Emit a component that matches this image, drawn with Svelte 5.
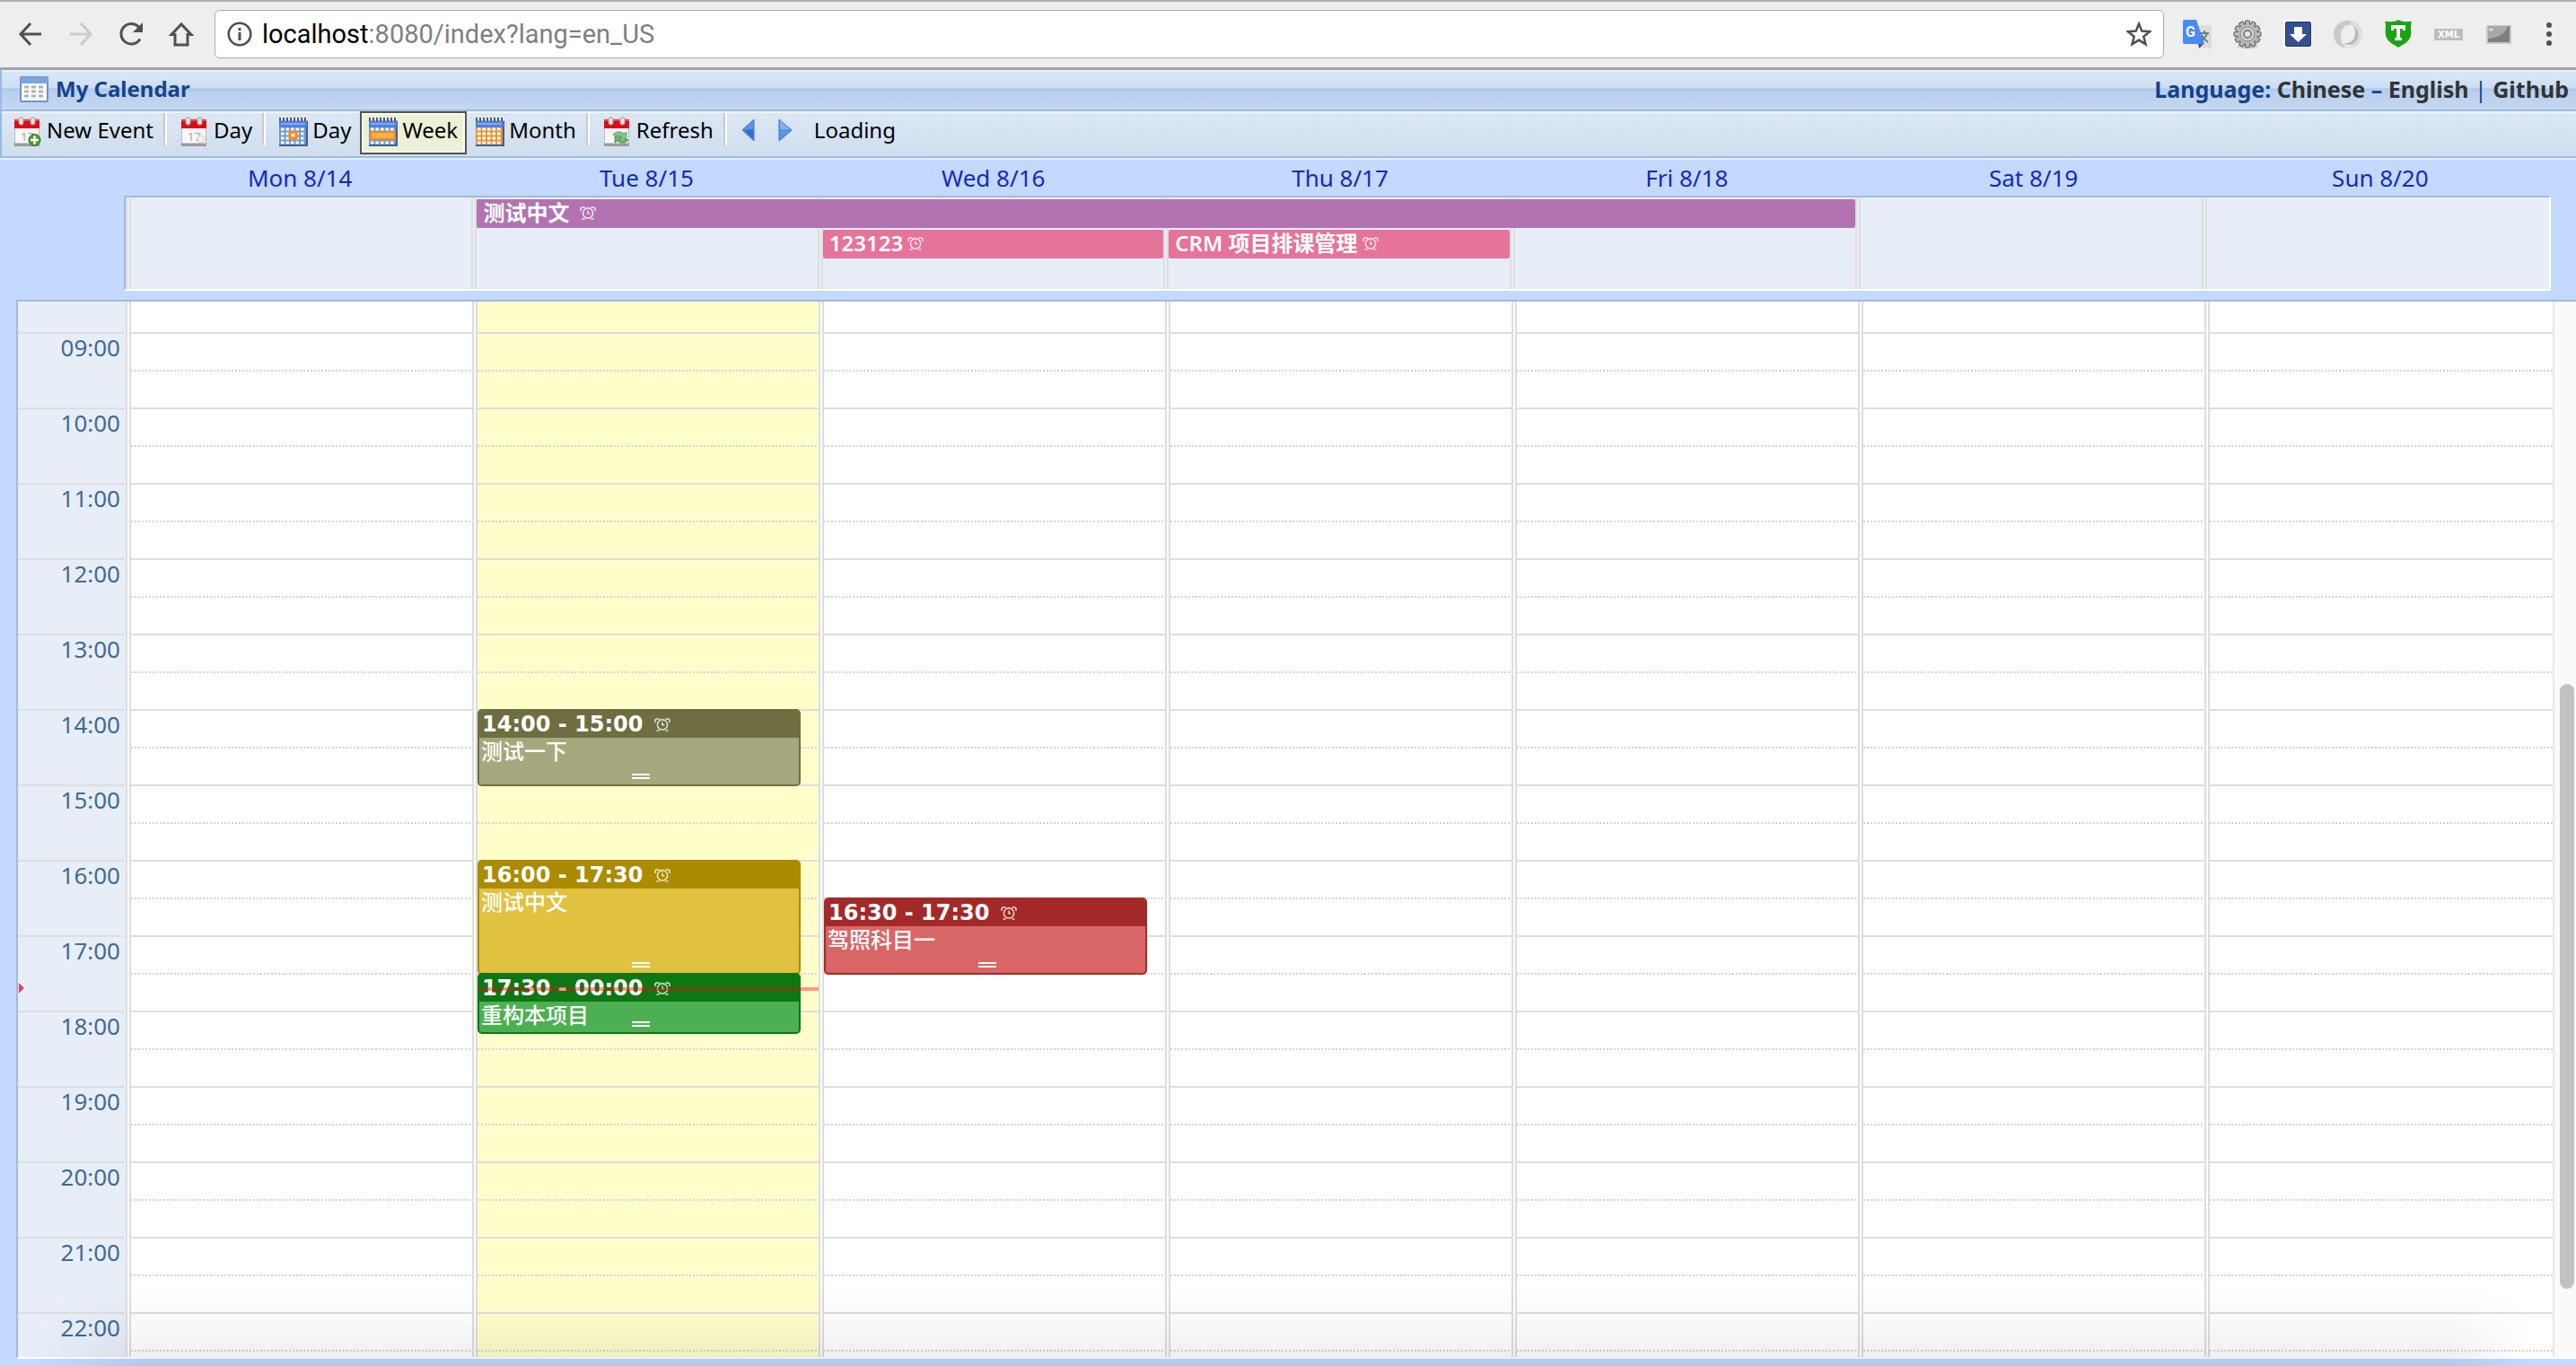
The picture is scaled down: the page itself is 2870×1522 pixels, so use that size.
<script>
  const days = ['Mon 8/14', 'Tue 8/15', 'Wed 8/16', 'Thu 8/17', 'Fri 8/18', 'Sat 8/19', 'Sun 8/20'];
  const hours = ['09', '10', '11', '12', '13', '14', '15', '16', '17', '18', '19', '20', '21', '22'];
  const today = 1;
  const firstHour = 9;
  const hourHeight = 84;

  const allDay = [
    { title: '测试中文', from: 1, span: 4, row: 1, kind: 'purple', spaced: true },
    { title: '123123', from: 2, span: 1, row: 2, kind: 'pink' },
    { title: 'CRM 项目排课管理', from: 3, span: 1, row: 2, kind: 'pink' }
  ];

  const events = [
    { day: 1, start: 14, length: 86, time: '14:00 - 15:00', title: '测试一下', kind: 'olive' },
    { day: 1, start: 16, length: 128, time: '16:00 - 17:30', title: '测试中文', kind: 'gold' },
    { day: 1, start: 17.5, length: 68, time: '17:30 - 00:00', title: '重构本项目', kind: 'green' },
    { day: 2, start: 16.5, length: 86, time: '16:30 - 17:30', title: '驾照科目一', kind: 'red' }
  ];

  // 34px of the 08:00 row stay visible above the first full hour.
  const yOf = (t) => 34 + (t - firstHour) * hourHeight;
  const gearTeeth = Array.from({ length: 12 }, (_, i) => i * 30);
</script>

{#snippet alarm()}
  <svg class="alarm" viewBox="0 0 18 15" aria-hidden="true">
    <g fill="none" stroke="currentColor" stroke-width="1.5">
      <circle cx="9" cy="7.5" r="5.6" />
      <path d="M9 4.500v3.200h2.200" />
      <path d="M1 5V3q0-2 2-2h2M13 1h2q2 0 2 2v2M2.500 14h3M12.500 14h3" />
      <path d="M5 1.500h8" stroke-dasharray="1.500 2" />
    </g>
  </svg>
{/snippet}

{#snippet pageCalendar(extra)}
  <svg class="icon" viewBox="0 0 32 34" aria-hidden="true">
    <rect x="1.500" y="3" width="27" height="29" rx="1" fill="#f7f7f7" stroke="#bdbdbd" />
    <path d="M1 29.500h28V33H1z" fill="#9c9c9c" />
    <path d="M1 3h28v10H1z" fill="#de0b12" />
    <path d="M1 3h28v2H1z" fill="#f0444a" />
    <rect x="6" y="1" width="5" height="8" rx="2" fill="#e8e0e0" stroke="#a99" />
    <rect x="19" y="1" width="5" height="8" rx="2" fill="#e8e0e0" stroke="#a99" />
    {#if extra !== 'refresh'}<text x="8" y="27" class="digits">17</text>{/if}
    {#if extra === 'add'}
      <circle cx="23.500" cy="26" r="6.500" fill="#4e9a36" stroke="#2f6d1f" />
      <path d="M23.500 21.500v9M19 26h9" stroke="#fff" stroke-width="2.600" />
    {:else if extra === 'today'}
      <circle cx="23" cy="25" r="4" fill="#f1f1f1" stroke="#d5d5d5" />
    {:else}
      <path d="M11 20c3-4 9-4 12-1l3-2v8h-8l3-3c-3-2-5-2-6 0z" fill="#8cc48a" stroke="#5ea763" />
      <path d="M28 26c-3 4-9 4-12 1l-3 2v-7h8l-3 3c3 2 5 2 6 0z" fill="#6fb472" stroke="#4d9a55" />
    {/if}
  </svg>
{/snippet}

{#snippet gridCalendar(mode)}
  <svg class="icon" viewBox="0 0 32 34" aria-hidden="true">
    <rect x="0" y="3" width="32" height="30" fill="#3f5f92" />
    <rect x="0" y="3" width="30" height="28" fill={mode === 'month' ? '#e5963a' : '#7398d4'} />
    <rect x="0" y="4" width="31" height="8" fill="#4c7fe8" />
    <path d="M2 8h27" stroke="#86abf5" stroke-width="2" />
    <path d="M0 3h32" stroke="#f4f4f4" stroke-width="3" />
    <path d="M0 3h32" stroke="#555" stroke-width="4" stroke-dasharray="2 2" />
    {#each [14, 19, 24, 29] as y}
      <path d="M2 {y}h27" stroke="#fff" stroke-width="3.200" stroke-dasharray="3.500 2" />
    {/each}
    {#if mode === 'day'}
      <rect x="12" y="17" width="7" height="7" fill="#fff3c8" stroke="#f08a1c" stroke-width="3" />
    {:else if mode === 'week'}
      <rect x="2" y="17" width="27" height="8" fill="#ffb04e" stroke="#f08a1c" stroke-width="2" />
    {/if}
  </svg>
{/snippet}

<div class="window">
  <nav class="browser" aria-label="Browser">
    <button class="nav" aria-label="Back">
      <svg viewBox="0 0 28 28"><path d="M26 14H3M14 2L3 14l11 12" /></svg>
    </button>
    <button class="nav off" aria-label="Forward">
      <svg viewBox="0 0 28 28"><path d="M2 14h23M14 2l11 12-11 12" /></svg>
    </button>
    <button class="nav" aria-label="Reload">
      <svg viewBox="0 0 28 28">
        <path d="M24 19.500A11.300 11.300 0 1 1 22.500 6" /><path d="M27 1v11H16z" fill="#505050" stroke="none" />
      </svg>
    </button>
    <button class="nav" aria-label="Home">
      <svg viewBox="0 0 28 28"><path d="M14 3L3 14.500h4V26h14V14.500h4z" /></svg>
    </button>
    <div class="address">
      <svg class="info" viewBox="0 0 28 28" aria-hidden="true">
        <circle cx="14" cy="14" r="12.300" fill="none" stroke="#505050" stroke-width="2.600" />
        <path d="M14 12v9M14 7v3" stroke="#505050" stroke-width="3" />
      </svg>
      <span class="url">localhost<span>:8080/index?lang=en_US</span></span>
      <svg class="star" viewBox="0 0 28 28" aria-hidden="true">
        <path d="M14 2.500l3.300 8.100 8.700.6-6.700 5.600 2.200 8.500L14 20.600l-7.500 4.700 2.200-8.500L2 11.200l8.700-.6z" fill="none" stroke="#505050" stroke-width="2.500" />
      </svg>
    </div>
    <div class="extensions">
      <svg viewBox="0 0 32 32" aria-hidden="true">
        <path d="M14 6h16a2 2 0 0 1 2 2v22a2 2 0 0 1-2 2H18z" fill="#dcdcdc" />
        <path d="M17 26h7l-6 6z" fill="#3a50b8" />
        <path d="M2 0h13l9 27H2a2 2 0 0 1-2-2V2a2 2 0 0 1 2-2z" fill="#4a8af4" />
        <text x="3" y="19" class="gletter">G</text>
        <path d="M19 15h10M24 12v3M27 15c-1 4-4 7-7 9M21 17c2 4 4 6 7 8" fill="none" stroke="#5f7f8c" stroke-width="1.800" />
      </svg>
      <svg viewBox="0 0 32 32" aria-hidden="true">
        <ellipse cx="16" cy="30" rx="12" ry="2" fill="#cfcfcf" />
        {#each gearTeeth as angle}
          <rect x="13.500" y="1" width="5" height="7" rx="1" fill="#b9b9b9" stroke="#555" transform="rotate({angle} 16 16)" />
        {/each}
        <circle cx="16" cy="16" r="11" fill="#b9b9b9" />
        <circle cx="16" cy="16" r="8" fill="#cdcdcd" stroke="#8c8c8c" />
        <circle cx="16" cy="16" r="4" fill="#e5e5e5" stroke="#666" stroke-width="1.500" />
      </svg>
      <svg viewBox="0 0 32 32" aria-hidden="true">
        <rect width="32" height="32" fill="#fff" />
        <rect x="2.500" y="2.500" width="28" height="27" rx="1.500" fill="#34508f" stroke="#1f3768" />
        <path d="M12 8h9v8h5l-9.500 9L7 16h5z" fill="#fff" />
      </svg>
      <svg viewBox="0 0 32 32" aria-hidden="true">
        <path d="M20 1C8-1 0 7 0 16s7 16 16 15C9 29 7 22 8 16 9 8 14 5 21 6c-2-2-3-4-1-5z" fill="#c9c9c9" />
        <path d="M20 1c8 2 12 8 12 14 0 10-7 17-17 16 7-2 10-8 10-15 0-6-2-9-6-11z" fill="#dedede" />
        <path d="M11 26c8 1 13-4 13-11 0-4-1-7-4-9 9 3 10 15 3 20-4 3-9 3-12 0z" fill="#b9b9b9" />
      </svg>
      <svg viewBox="0 0 32 32" aria-hidden="true">
        <path d="M16 0c4 3 9 2 15 2-2 4 0 9-1 15-1 7-8 10-14 14C10 27 3 24 2 17 1 11 3 6 1 2c6 0 11 1 15-2z" fill="#1aa313" />
        <path d="M8 6h16v6h-3v-2h-3v10h2v3h-8v-3h2V10h-3v2H8z" fill="#fff" />
      </svg>
      <svg viewBox="0 0 32 32" aria-hidden="true">
        <rect y="10" width="32" height="13" fill="#bdbdbd" />
        <text x="16" y="20" class="xml">XML</text>
      </svg>
      <svg viewBox="0 0 32 32" aria-hidden="true">
        <rect x="2" y="6" width="28" height="21" rx="1" fill="#c8c8c8" />
        <rect x="4" y="7" width="24" height="18" fill="#808080" />
        <path d="M4 7h22C24 15 16 20 4 21z" fill="#a9a9a9" />
        <path d="M5 11h4M7.500 9.500L9 11l-1.500 1.500" fill="none" stroke="#fff" />
      </svg>
      <button class="dots" aria-label="Menu">
        <svg viewBox="0 0 32 32"><g fill="#505050"><circle cx="16" cy="6" r="3" /><circle cx="16" cy="16" r="3" /><circle cx="16" cy="26" r="3" /></g></svg>
      </button>
    </div>
  </nav>

  <header class="title">
    <svg class="icon" viewBox="0 0 32 32" aria-hidden="true">
      <rect x="1" y="3" width="30" height="27" rx="1" fill="#fff" stroke="#6d93c9" stroke-width="2" />
      <path d="M1 3h30v7H1z" fill="#79a7e0" />
      <g stroke="#b0b0b0" stroke-width="3" stroke-dasharray="5 3">
        <path d="M5 14h23M5 19h23M5 24h23" />
      </g>
    </svg>
    <h1>My Calendar</h1>
    <p>Language: <a href="?lang=zh_CN">Chinese</a> – <a href="?lang=en_US">English</a> <span class="pipe">|</span> <a href="#github">Github</a></p>
  </header>

  <div class="toolbar" role="toolbar" aria-label="Calendar">
    <button>{@render pageCalendar('add')}New Event</button>
    <span class="sep"></span>
    <button>{@render pageCalendar('today')}Day</button>
    <span class="sep"></span>
    <button>{@render gridCalendar('day')}Day</button>
    <button class="active" aria-pressed="true">{@render gridCalendar('week')}Week</button>
    <button>{@render gridCalendar('month')}Month</button>
    <span class="sep"></span>
    <button>{@render pageCalendar('refresh')}Refresh</button>
    <span class="sep"></span>
    <button aria-label="Previous week">
      <svg class="arrow" viewBox="0 0 20 28"><path d="M15 2v24L2 14z" fill="#5b94e4" stroke="#3d74c9" /><path d="M14 13v11L4 14z" fill="#2f6bd0" /></svg>
    </button>
    <button aria-label="Next week">
      <svg class="arrow" viewBox="0 0 20 28"><path d="M3 2v24l14-12z" fill="#5b94e4" stroke="#3d74c9" /><path d="M4 3v10h11z" fill="#7fb0f0" /></svg>
    </button>
    <span class="status">Loading</span>
  </div>

  <main>
    <div class="heads">
      {#each days as day}<div>{day}</div>{/each}
    </div>

    <div class="allday">
      {#each days as day, i (day)}
        <div class="slot" style:grid-column={i + 1}></div>
      {/each}
      {#each allDay as item}
        <div class="bar {item.kind}" style:grid-column="{item.from + 1} / span {item.span}" style:grid-row={item.row}>
          {item.title}<span class:spaced={item.spaced}>{@render alarm()}</span>
        </div>
      {/each}
    </div>

    <div class="board">
      <div class="times">
        <div class="lead"></div>
        {#each hours as hour}<div class="hour">{hour}:00</div>{/each}
        <svg class="now-mark" viewBox="0 0 10 18" style:top="{yOf(17.5) + 8}px" aria-hidden="true">
          <path d="M0 1l8 8-8 8z" fill="#dd4477" stroke="#fff" stroke-width="1.500" />
        </svg>
      </div>
      <div class="columns">
        {#each days as day, i (day)}
          <section class="day" class:today={i === today} aria-label={day}>
            <div class="lead"></div>
            {#each hours as hour (hour)}
              <div class="cell"></div>
            {/each}
            {#each events.filter((e) => e.day === i) as e}
              <article class="event {e.kind}" style:top="{yOf(e.start)}px" style:height="{e.length}px">
                <h2>{e.time}{@render alarm()}</h2>
                <p>{e.title}</p>
                <i class="grip"></i>
              </article>
            {/each}
            {#if i === today}
              <div class="now" style:top="{yOf(17.5) + 16}px"></div>
            {/if}
          </section>
        {/each}
      </div>
      <div class="scroll"><div class="thumb"></div></div>
    </div>
  </main>
  <div class="shade"></div>
</div>

<style>
  :global(body) {
    margin: 0;
    background: #c3d9ff;
  }
  :global(*) {
    box-sizing: border-box;
  }
  .window {
    position: relative;
    display: flex;
    flex-direction: column;
    height: 100vh;
    overflow: hidden;
    font: 24px/32px 'Noto Sans', 'Noto Sans CJK SC', sans-serif;
    color: #000;
  }
  button {
    display: flex;
    align-items: center;
    margin: 0;
    padding: 0;
    border: 0;
    background: none;
    font: inherit;
    color: inherit;
  }
  h1,
  h2,
  p {
    margin: 0;
    font-size: inherit;
  }

  .browser {
    display: flex;
    align-items: center;
    flex: none;
    height: 77px;
    padding: 0 14px 2px 20px;
    border-top: 2px solid #b0b0b0;
    border-bottom: 2px solid #a3a3a3;
    background: #eeeeee;
  }
  .nav {
    margin-right: 28px;
  }
  .nav svg {
    width: 28px;
    height: 28px;
    fill: none;
    stroke: #505050;
    stroke-width: 3;
  }
  .nav.off svg {
    stroke: #cccccc;
  }
  .address {
    display: flex;
    align-items: center;
    flex: 1;
    height: 54px;
    margin-left: -5px;
    padding: 0 13px;
    border: 1px solid #a9a9a9;
    border-radius: 6px;
    background: #fff;
  }
  .info,
  .star {
    flex: none;
    width: 28px;
    height: 28px;
  }
  .url {
    flex: 1;
    padding-left: 11px;
    font-family: Roboto, sans-serif;
    font-size: 29px;
  }
  .url span {
    color: #7f7f7f;
  }
  .extensions {
    display: flex;
    gap: 24px;
    margin-left: 21px;
  }
  .extensions svg {
    display: block;
    width: 32px;
    height: 32px;
  }
  .gletter {
    font: bold 16px Roboto, sans-serif;
    fill: #fff;
  }
  .xml {
    font: bold 10px 'DejaVu Sans', sans-serif;
    fill: #fff;
    text-anchor: middle;
  }
  .digits {
    font: 13px 'Noto Sans', sans-serif;
    fill: #a5a5a5;
  }

  .title {
    display: flex;
    align-items: center;
    flex: none;
    height: 47px;
    padding: 0 8px 2px 20px;
    border-top: 1px solid #8ba5c9;
    border-bottom: 2px solid #99bbe8;
    border-left: 2px solid #99bbe8;
    background: linear-gradient(#e8f1fb 2px, #dae7f6 2px, #cddef3 45%, #abc7ec 48%, #b8cfee 55%, #c6d8f0);
    font-size: 25px;
    font-weight: bold;
    color: #15428b;
  }
  .pipe {
    font-weight: normal;
  }
  .icon {
    flex: none;
    width: 32px;
    height: 34px;
  }
  h1 {
    flex: 1;
    padding-left: 8px;
    font-size: 24px;
  }
  a {
    color: #333;
    text-decoration: none;
  }

  .toolbar {
    display: flex;
    align-items: flex-start;
    flex: none;
    height: 52px;
    padding-left: 3px;
    border-bottom: 2px solid #99bbe8;
    border-left: 2px solid #99bbe8;
    background: linear-gradient(#f0f5fb 2px, #dbe7f4 2px, #cfddee);
  }
  .toolbar button {
    gap: 5px;
    height: 48px;
    padding: 0 8px 6px;
    border: 2px solid transparent;
  }
  .toolbar .icon {
    margin-top: 4px;
  }
  .toolbar .active {
    border-color: #555;
    background: #ecf0d5;
    box-shadow: inset 0 0 0 2px #fbfcf3;
  }
  .sep {
    width: 4px;
    height: 36px;
    margin: 2px 5px 0 1px;
    border-left: 2px solid #cbcbcb;
    border-right: 2px solid #fff;
  }
  .arrow {
    width: 20px;
    height: 28px;
  }
  .status {
    padding: 5px 12px;
  }

  main {
    display: flex;
    flex: 1;
    flex-direction: column;
    min-height: 0;
    padding: 0 0 8px 18px;
    border-top: 2px solid #e8effc;
    background: #c3d9ff;
  }
  .heads,
  .allday {
    display: grid;
    grid-template-columns: repeat(7, 1fr);
    column-gap: 2px;
    flex: none;
  }
  .heads {
    height: 40px;
    margin: 0 26px 0 124px;
    font-size: 26px;
    line-height: 40px;
    text-align: center;
    color: #112abb;
  }
  .allday {
    grid-template-rows: 32px 32px 1fr;
    row-gap: 2px;
    height: 106px;
    margin: 0 28px 10px 120px;
    padding: 2px 0 0 4px;
    border: 2px solid #fff;
    border-top-color: #a2bbdd;
    border-left-color: #a2bbdd;
    background: linear-gradient(#dddddd, #dddddd) 0 0 / 2px 100% no-repeat #e8eef7;
  }
  .slot {
    grid-row: 1 / 4;
    margin-top: -2px;
    border: solid #dddddd;
    border-width: 0 2px;
  }
  .slot:nth-child(7) {
    border-right: 0;
  }
  .bar {
    display: flex;
    align-items: center;
    margin: 0 2px;
    padding: 0 0 2px 7px;
    border-radius: 2px;
    font-weight: 600;
    color: #fff;
  }
  .bar span {
    display: flex;
    padding-left: 5px;
  }
  .bar .spaced {
    padding-left: 12px;
  }
  .alarm {
    flex: none;
    width: 18px;
    height: 15px;
    opacity: 0.8;
  }
  .purple {
    background: #b373b3;
  }
  .pink {
    background: #e67399;
  }

  .board {
    display: flex;
    flex: 1;
    min-height: 0;
    overflow: hidden;
    border: solid #a2bbdd;
    border-width: 2px 0 2px 2px;
    border-bottom-color: #fff;
  }
  .times {
    position: relative;
    width: 122px;
    border-right: 2px solid #dddddd;
    background: #e8eef7;
  }
  .lead {
    height: 36px;
    border-bottom: 2px solid #dddddd;
  }
  .times .lead,
  .hour {
    margin-right: 2px;
  }
  .hour {
    height: 84px;
    padding: 0 4px;
    border-bottom: 2px solid #dddddd;
    font-size: 26px;
    line-height: 30px;
    text-align: right;
    color: #426a93;
  }
  .now-mark {
    position: absolute;
    left: 0;
    width: 10px;
    height: 18px;
  }
  .columns {
    display: grid;
    grid-template-columns: repeat(7, 1fr);
    column-gap: 2px;
    flex: 1;
    padding-left: 2px;
    background: #fff;
  }
  .day {
    position: relative;
    border: solid #dddddd;
    border-width: 0 2px;
  }
  .day:last-child {
    border-right: 0;
  }
  .today {
    background: #ffffcc;
  }
  .cell {
    height: 84px;
    border-bottom: 2px solid #dddddd;
    background: repeating-linear-gradient(90deg, #d4d4d4 0 2px, transparent 2px 4px) 0 40px / 100% 2px no-repeat;
  }
  .event {
    position: absolute;
    left: 0;
    width: calc(100% - 20px);
    overflow: hidden;
    border: 2px solid;
    border-radius: 5px;
  }
  h2 {
    display: flex;
    align-items: center;
    gap: 13px;
    height: 30px;
    padding-left: 3px;
    font: bold 24px/32px 'DejaVu Sans', sans-serif;
    color: #fff;
  }
  .event p {
    padding-left: 2px;
    font-weight: 500;
    line-height: 30px;
    color: #fff;
  }
  .grip {
    position: absolute;
    bottom: 6px;
    left: 50%;
    width: 20px;
    height: 6px;
    margin-left: -8px;
    border: solid #fff;
    border-width: 2px 0;
  }
  .olive {
    border-color: #6e6e41;
    background: #a7a77d;
  }
  .olive h2 {
    background: #6e6e41;
  }
  .gold {
    border-color: #ab8b00;
    background: #e0c240;
  }
  .gold h2 {
    background: #ab8b00;
  }
  .green {
    border-color: #0d7813;
    background: #4cb052;
  }
  .green h2 {
    background: #0d7813;
  }
  .red {
    border-color: #a32929;
    background: #d96666;
  }
  .red h2 {
    background: #a32929;
  }
  .now {
    position: absolute;
    left: 0;
    right: 0;
    height: 4px;
    background: rgba(255, 0, 0, 0.4);
  }
  .scroll {
    width: 26px;
    padding: 426px 2px 0 6px;
    border-left: 2px solid #e8e8e8;
    background: #fafafa;
  }
  .thumb {
    width: 16px;
    height: 674px;
    border-radius: 8px;
    background: #c1c1c1;
  }
  .shade {
    position: absolute;
    right: 0;
    bottom: 0;
    left: 0;
    height: 90px;
    background: linear-gradient(transparent, rgba(0, 0, 0, 0.02) 40%, rgba(0, 0, 0, 0.07));
    mask-image: linear-gradient(90deg, transparent 40px, #000 160px, #000 calc(100% - 140px), transparent calc(100% - 50px));
    pointer-events: none;
  }
</style>
